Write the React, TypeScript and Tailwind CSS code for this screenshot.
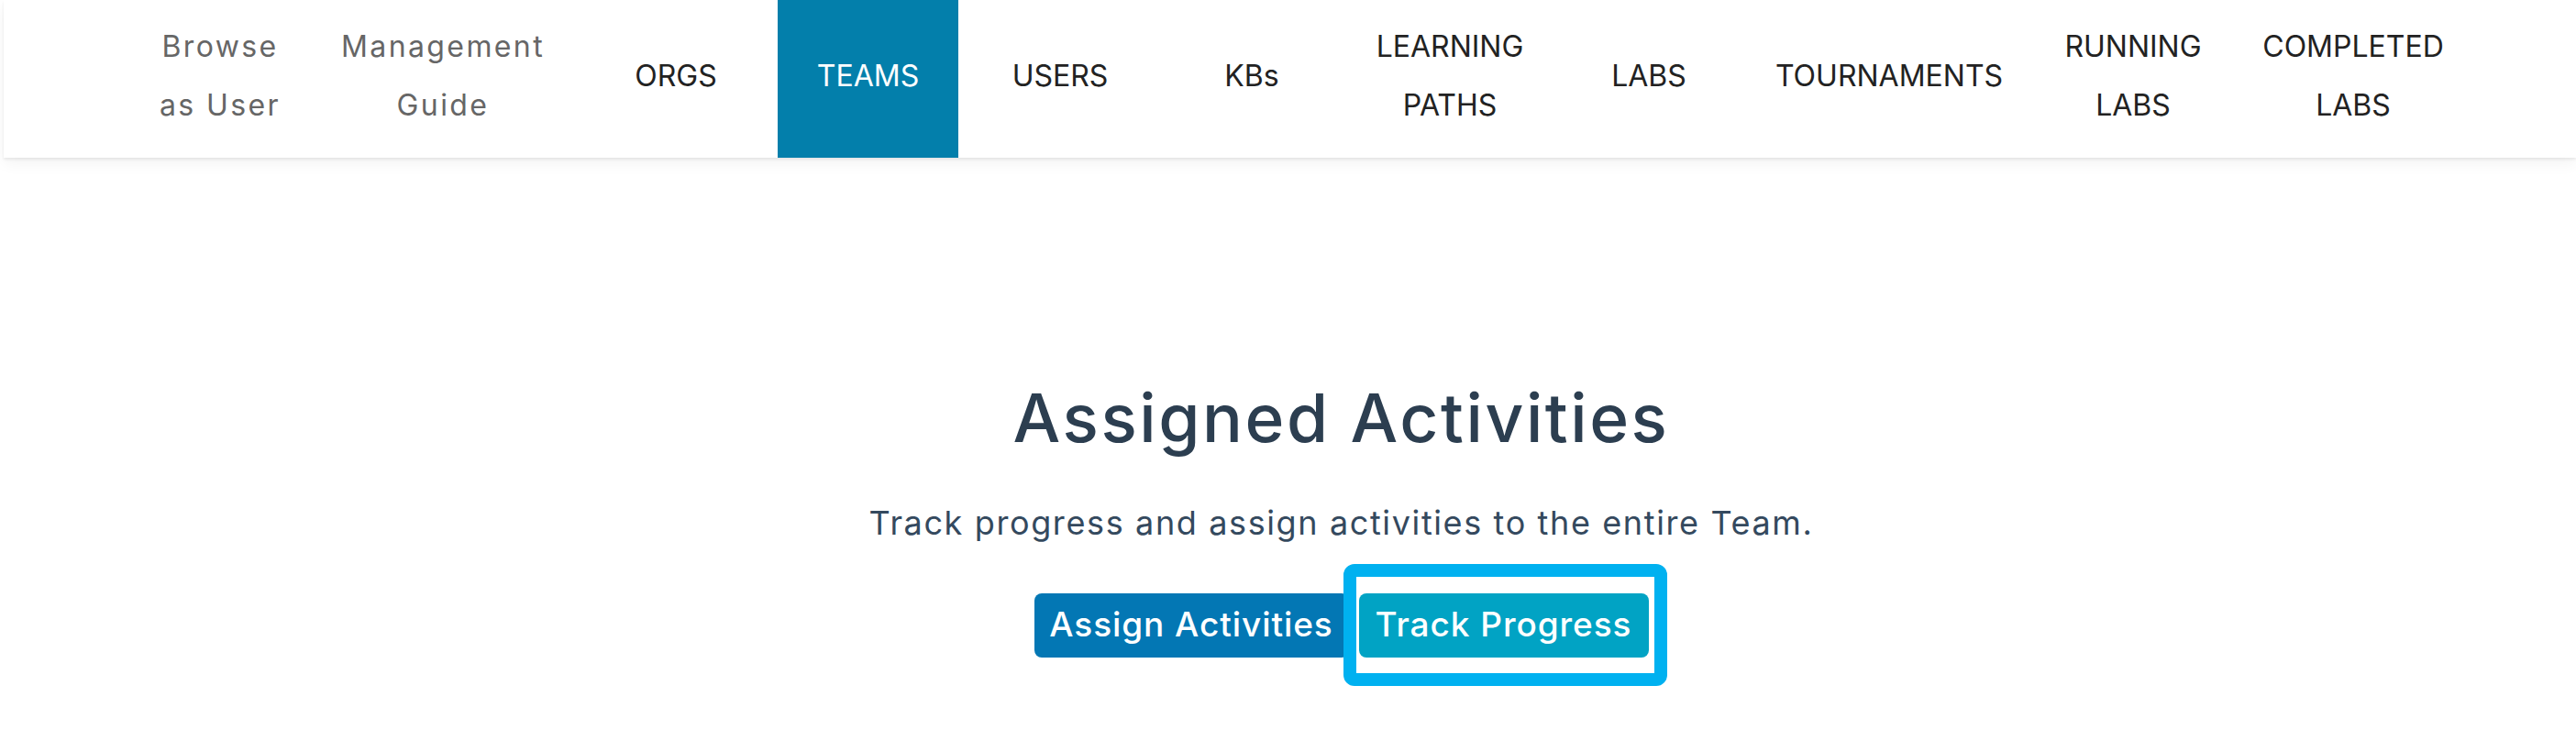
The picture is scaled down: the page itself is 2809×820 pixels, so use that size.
import React from 'react';

interface NavItem {
  label: React.ReactNode;
  width: string;
  active?: boolean;
  muted?: boolean;
}

const navItems: NavItem[] = [
  { label: <>Browse<br />as User</>, width: 'w-[200px]', muted: true },
  { label: <>Management<br />Guide</>, width: 'w-[286px]', muted: true },
  { label: 'ORGS', width: 'w-[222px]' },
  { label: 'TEAMS', width: 'w-[197px]', active: true },
  { label: 'USERS', width: 'w-[222px]' },
  { label: 'KBs', width: 'w-[196px]' },
  { label: <>LEARNING<br />PATHS</>, width: 'w-[236px]' },
  { label: 'LABS', width: 'w-[198px]' },
  { label: 'TOURNAMENTS', width: 'w-[326px]' },
  { label: <>RUNNING<br />LABS</>, width: 'w-[206px]' },
  { label: <>COMPLETED<br />LABS</>, width: 'w-[274px]' },
];

const TopNav = () => (
  <nav className="ml-[4px] h-[172px] bg-white flex pl-[136px] shadow-[0_2px_3px_rgba(0,0,0,0.07),0_6px_16px_rgba(0,0,0,0.05)] relative z-10">
    {navItems.map((item, i) => (
      <div
        key={i}
        className={`${item.width} h-full flex items-center justify-center text-center pb-[6px] text-[32px] leading-[64px] ${
          item.active
            ? 'bg-[#037fab] text-white'
            : item.muted
            ? 'text-[#666666] tracking-[0.075em]'
            : 'text-[#222222]'
        }`}
      >
        <span>{item.label}</span>
      </div>
    ))}
  </nav>
);

export default function App() {
  return (
    <div className="min-h-screen bg-white font-['Inter','Noto_Sans',sans-serif]">
      <TopNav />

      <main className="pl-[116px] flex flex-col items-center">
        <h1 className="mt-[248px] text-[73px] leading-[72px] font-medium text-[#2c3e50] tracking-[0.035em]">
          Assigned Activities
        </h1>
        <p className="mt-[61px] text-[36px] leading-[34px] text-[#34495e] tracking-[0.045em]">
          Track progress and assign activities to the entire Team.
        </p>

        <div className="mt-[60px] flex gap-[11px]">
          <button className="w-[343px] h-[70px] rounded-[8px] bg-[#0377b4] text-white text-[37px] font-medium tracking-[0.025em] flex items-center justify-center pb-[3px]">
            Assign Activities
          </button>
          <div className="relative">
            <button className="w-[316px] h-[70px] rounded-[8px] bg-[#01a3c4] text-white text-[37px] font-medium tracking-[0.025em] flex items-center justify-center pb-[3px]">
              Track Progress
            </button>
            <div className="absolute -left-[17px] -right-[20px] -top-[32px] -bottom-[31px] border-[14px] border-[#00b1f0] rounded-[12px] pointer-events-none" />
          </div>
        </div>
      </main>
    </div>
  );
}
